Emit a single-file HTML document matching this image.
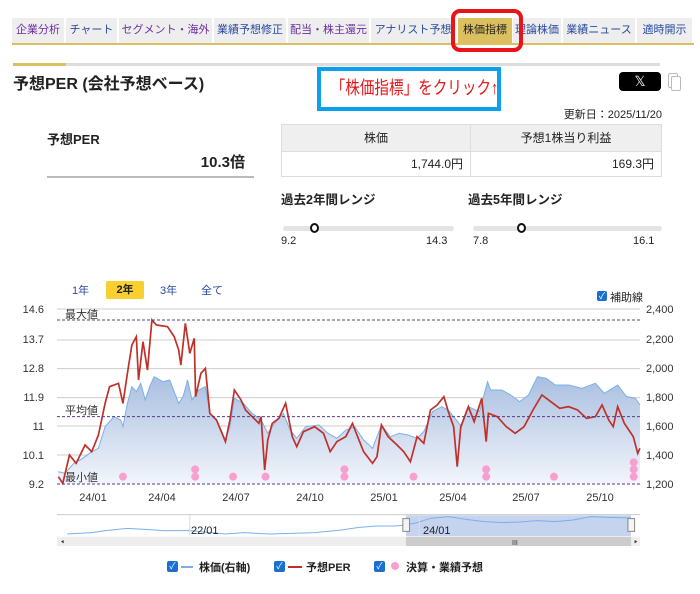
<!DOCTYPE html>
<html><head><meta charset="utf-8"><style>
*{margin:0;padding:0;box-sizing:border-box}
body{width:700px;height:594px;background:#fff;position:relative;overflow:hidden;font-family:"Liberation Sans","Noto Sans CJK JP",sans-serif;color:#222}
.a{position:absolute}
.tab{position:absolute;top:18px;height:25px;background:#eee;font-size:11px;line-height:25px;text-align:center;color:#6a2fa0;white-space:nowrap;overflow:hidden}
.tab.b{color:#2a4aa0}
</style></head><body>
<div class="tab" style="left:12px;width:52px">企業分析</div>
<div class="tab b" style="left:66px;width:51px">チャート</div>
<div class="tab" style="left:119px;width:93px">セグメント・海外</div>
<div class="tab b" style="left:214px;width:72px">業績予想修正</div>
<div class="tab" style="left:288px;width:81px">配当・株主還元</div>
<div class="tab b" style="left:371px;width:84px">アナリスト予想</div>
<div class="tab" style="left:458px;width:54px;background:#dcc060;color:#222">株価指標</div>
<div class="tab b" style="left:513px;width:48px">理論株価</div>
<div class="tab b" style="left:563px;width:72px">業績ニュース</div>
<div class="tab b" style="left:637px;width:55px">適時開示</div>
<div class="a" style="left:12px;top:43px;width:682px;height:2px;background:#dcc060"></div>
<div class="a" style="left:451px;top:9px;width:72px;height:43px;border:4px solid #e8141a;border-radius:9px"></div>
<div class="a" style="left:13px;top:63px;width:647px;height:3px;background:#ddd"></div>
<div class="a" style="left:13px;top:63px;width:53px;height:3px;background:#dcc060"></div>
<div class="a" style="left:13px;top:70px;font-size:16px;font-weight:bold">予想PER (会社予想ベース)</div>
<div class="a" style="left:317px;top:67px;width:184px;height:44px;border:4px solid #0aa0ee"></div>
<div class="a" style="left:311px;top:77px;width:196px;color:#e8141a;font-size:18px;line-height:22px;text-align:center;white-space:nowrap"><span style="display:inline-block;transform:scaleX(0.81);transform-origin:center">「株価指標」をクリック↑</span></div>
<div class="a" style="left:619px;top:72px;width:42px;height:19px;background:#000;border-radius:4px;color:#fff;font-size:14px;line-height:19px;text-align:center">𝕏</div>
<div class="a" style="left:668px;top:73px;width:10px;height:15px;border:1.5px solid #bbb;border-radius:2px"></div>
<div class="a" style="left:671px;top:76px;width:10px;height:15px;border:1.5px solid #bbb;border-radius:2px;background:#fff"></div>
<div class="a" style="left:550px;top:106px;width:112px;text-align:right;font-size:11px">更新日：2025/11/20</div>
<div class="a" style="left:47px;top:129px;font-size:13px;font-weight:bold">予想PER</div>
<div class="a" style="left:47px;top:151px;width:198px;text-align:right;font-size:15px;font-weight:bold">10.3倍</div>
<div class="a" style="left:47px;top:176px;width:207px;height:2px;background:#bbb"></div>
<div class="a" style="left:281px;top:124px;width:381px;height:53px;border:1px solid #ddd;font-size:12px">
<div class="a" style="left:0;top:0;width:189px;height:27px;background:#efefef;border-right:1px solid #ddd;border-bottom:1px solid #ddd;text-align:center;line-height:27px">株価</div>
<div class="a" style="left:189px;top:0;width:190px;height:27px;background:#efefef;border-bottom:1px solid #ddd;text-align:center;line-height:27px">予想1株当り利益</div>
<div class="a" style="left:0;top:27px;width:189px;height:24px;border-right:1px solid #ddd;text-align:right;line-height:24px;padding-right:7px">1,744.0円</div>
<div class="a" style="left:189px;top:27px;width:190px;height:24px;text-align:right;line-height:24px;padding-right:7px">169.3円</div>
</div>
<div class="a" style="left:281px;top:189px;font-size:12.5px;font-weight:bold">過去2年間レンジ</div>
<div class="a" style="left:468px;top:189px;font-size:12.5px;font-weight:bold">過去5年間レンジ</div>
<div class="a" style="left:283px;top:226px;width:171px;height:5px;background:#e4e4e4;border-radius:3px"></div>
<div class="a" style="left:473px;top:226px;width:189px;height:5px;background:#e4e4e4;border-radius:3px"></div>
<div class="a" style="left:310px;top:223px;width:9px;height:10px;border:2.5px solid #111;border-radius:50%;background:#fff"></div>
<div class="a" style="left:517px;top:223px;width:9px;height:10px;border:2.5px solid #111;border-radius:50%;background:#fff"></div>
<div class="a" style="left:281px;top:235px;font-size:11px">9.2</div>
<div class="a" style="left:426px;top:235px;font-size:11px">14.3</div>
<div class="a" style="left:473px;top:235px;font-size:11px">7.8</div>
<div class="a" style="left:633px;top:235px;font-size:11px">16.1</div>
<div class="a" style="left:72px;top:282px;font-size:11px;color:#2a4aa0">1年</div>
<div class="a" style="left:106px;top:281px;width:38px;height:18px;background:#f8d030;border-radius:2px;font-size:11px;font-weight:bold;text-align:center;line-height:18px">2年</div>
<div class="a" style="left:160px;top:282px;font-size:11px;color:#2a4aa0">3年</div>
<div class="a" style="left:201px;top:282px;font-size:11px;color:#2a4aa0">全て</div>
<div class="a" style="left:597px;top:291px;width:10px;height:10px;background:#1a6fd0;border-radius:2px;color:#fff;font-size:9px;line-height:10px;text-align:center">✓</div>
<div class="a" style="left:610px;top:289px;font-size:11px">補助線</div>
<svg class="a" style="left:0;top:0" width="700" height="594">
<defs><linearGradient id="g" x1="0" y1="0" x2="0" y2="1"><stop offset="0" stop-color="#a9bfe0"/><stop offset="1" stop-color="#f2f5fb"/></linearGradient></defs>
<g transform="translate(2.6,270) scale(0.4457,0.33333)">
<g stroke="#ccc" stroke-width="1"><line vector-effect="non-scaling-stroke" x1="122" y1="117" x2="1430" y2="117"/><line vector-effect="non-scaling-stroke" x1="122" y1="210" x2="1430" y2="210"/><line vector-effect="non-scaling-stroke" x1="122" y1="296" x2="1430" y2="296"/><line vector-effect="non-scaling-stroke" x1="122" y1="383" x2="1430" y2="383"/><line vector-effect="non-scaling-stroke" x1="122" y1="468" x2="1430" y2="468"/><line vector-effect="non-scaling-stroke" x1="122" y1="555" x2="1430" y2="555"/></g>
<polygon fill="url(#g)" points="125,642 125,605 140,610 160,580 180,565 200,545 215,535 230,470 250,440 265,450 270,470 280,400 290,350 300,365 310,340 320,390 330,350 340,320 360,335 375,330 395,400 405,380 415,330 425,390 440,360 455,350 465,430 480,450 500,510 510,470 520,385 540,400 560,430 580,450 595,490 610,460 630,430 645,480 660,505 680,470 710,465 730,490 750,505 770,480 790,470 810,510 830,535 850,465 870,500 890,490 910,495 930,505 945,485 965,425 985,410 1000,420 1030,470 1045,410 1070,425 1088,335 1095,360 1120,360 1140,375 1160,395 1180,375 1200,320 1220,325 1240,345 1270,345 1300,355 1330,340 1350,370 1380,345 1400,380 1420,385 1430,405 1430,642"/>
<polyline vector-effect="non-scaling-stroke" fill="none" stroke="#7ab0ea" stroke-width="1" points="125,605 140,610 160,580 180,565 200,545 215,535 230,470 250,440 265,450 270,470 280,400 290,350 300,365 310,340 320,390 330,350 340,320 360,335 375,330 395,400 405,380 415,330 425,390 440,360 455,350 465,430 480,450 500,510 510,470 520,385 540,400 560,430 580,450 595,490 610,460 630,430 645,480 660,505 680,470 710,465 730,490 750,505 770,480 790,470 810,510 830,535 850,465 870,500 890,490 910,495 930,505 945,485 965,425 985,410 1000,420 1030,470 1045,410 1070,425 1088,335 1095,360 1120,360 1140,375 1160,395 1180,375 1200,320 1220,325 1240,345 1270,345 1300,355 1330,340 1350,370 1380,345 1400,380 1420,385 1430,405"/>
<polyline vector-effect="non-scaling-stroke" fill="none" stroke="#c0302a" stroke-width="1.7" points="125,620 135,640 150,555 165,580 185,525 200,545 215,495 230,400 240,350 260,340 270,400 280,310 290,225 300,200 305,330 315,215 325,300 335,150 345,165 370,170 385,200 395,240 400,285 410,160 420,250 430,205 433,380 445,310 455,295 465,430 480,450 500,515 510,450 520,360 535,390 545,420 560,440 575,460 580,440 588,600 595,510 605,460 620,445 635,400 650,500 660,530 675,485 700,470 720,490 735,545 750,515 770,500 785,460 795,495 810,545 830,580 840,560 850,465 865,500 885,525 900,545 915,575 930,500 945,520 960,420 975,405 990,380 1000,425 1012,470 1020,590 1028,470 1045,410 1058,455 1075,385 1085,515 1090,430 1110,440 1130,470 1150,490 1170,470 1190,420 1210,375 1230,395 1250,415 1270,410 1290,420 1310,445 1330,440 1345,405 1360,450 1370,470 1380,410 1395,460 1415,500 1425,550 1430,535"/>
<g stroke="#5a3a80" stroke-width="1" stroke-dasharray="3,2"><line vector-effect="non-scaling-stroke" x1="122" y1="150" x2="1430" y2="150"/><line vector-effect="non-scaling-stroke" x1="122" y1="440" x2="1430" y2="440"/><line vector-effect="non-scaling-stroke" x1="122" y1="642" x2="1430" y2="642"/></g>
<g fill="#f7a0d0"><ellipse cx="270" cy="620" rx="9" ry="12"/><ellipse cx="432" cy="598" rx="9" ry="12"/><ellipse cx="432" cy="620" rx="9" ry="12"/><ellipse cx="517" cy="620" rx="9" ry="12"/><ellipse cx="590" cy="620" rx="9" ry="12"/><ellipse cx="767" cy="598" rx="9" ry="12"/><ellipse cx="767" cy="620" rx="9" ry="12"/><ellipse cx="922" cy="620" rx="9" ry="12"/><ellipse cx="1085" cy="598" rx="9" ry="12"/><ellipse cx="1085" cy="620" rx="9" ry="12"/><ellipse cx="1237" cy="620" rx="9" ry="12"/><ellipse cx="1416" cy="577" rx="9" ry="12"/><ellipse cx="1416" cy="598" rx="9" ry="12"/><ellipse cx="1416" cy="620" rx="9" ry="12"/></g>
</g>
<g transform="translate(2.6,490) scale(0.4457,0.33333)">
<line vector-effect="non-scaling-stroke" x1="122" y1="74" x2="1430" y2="74" stroke="#ccc" stroke-width="1"/>
<rect x="905" y="76" width="505" height="62" fill="#c5d3ee"/>
<polyline vector-effect="non-scaling-stroke" fill="none" stroke="#7ab0ea" stroke-width="1" points="145,132 200,128 230,122 280,115 320,118 360,122 420,122 500,132 540,128 600,132 700,128 760,120 800,112 840,108 880,108 905,105 930,98 960,85 1000,80 1040,88 1080,95 1120,98 1160,96 1200,92 1240,95 1280,90 1320,80 1360,82 1410,84"/>
<line vector-effect="non-scaling-stroke" x1="420" y1="76" x2="420" y2="138" stroke="#ddd" stroke-width="1"/>
<line vector-effect="non-scaling-stroke" x1="935" y1="76" x2="935" y2="138" stroke="#ddd" stroke-width="1"/>
<rect vector-effect="non-scaling-stroke" x="898" y="86" width="15" height="38" fill="#f4f4f4" stroke="#888" stroke-width="1"/>
<rect vector-effect="non-scaling-stroke" x="1403" y="86" width="15" height="38" fill="#f4f4f4" stroke="#888" stroke-width="1"/>
<rect x="122" y="140" width="1308" height="28" fill="#eee"/>
<rect x="905" y="140" width="505" height="28" fill="#ccc"/>
<polygon points="137,150 131,155 137,160" fill="#333"/><polygon points="1418,150 1424,155 1418,160" fill="#333"/>
</g>
<g font-family="Liberation Sans,Noto Sans CJK JP,sans-serif" font-size="11" fill="#333">
<text x="65" y="318">最大値</text><text x="65" y="414">平均値</text><text x="65" y="481">最小値</text>
<g text-anchor="end"><text x="44" y="313">14.6</text><text x="44" y="343">13.7</text><text x="44" y="372">12.8</text><text x="44" y="401">11.9</text><text x="44" y="430">11</text><text x="44" y="459">10.1</text><text x="44" y="488">9.2</text></g>
<text x="646" y="313">2,400</text><text x="646" y="343">2,200</text><text x="646" y="372">2,000</text><text x="646" y="401">1,800</text><text x="646" y="430">1,600</text><text x="646" y="459">1,400</text><text x="646" y="488">1,200</text>
<g text-anchor="middle"><text x="93" y="501">24/01</text><text x="162" y="501">24/04</text><text x="236" y="501">24/07</text><text x="310" y="501">24/10</text><text x="384" y="501">25/01</text><text x="453" y="501">25/04</text><text x="526" y="501">25/07</text><text x="600" y="501">25/10</text></g>
<text x="191" y="534" fill="#222">22/01</text><text x="423" y="534" fill="#222">24/01</text>
<text x="512" y="545" font-size="7">III</text>
</g>
</svg>
<div class="a" style="left:167px;top:561px;width:11px;height:11px;background:#1a6fd0;border-radius:2px;color:#fff;font-size:9px;line-height:11px;text-align:center">✓</div>
<div class="a" style="left:181px;top:566px;width:12px;height:2px;background:#7ab0ea"></div>
<div class="a" style="left:199px;top:559px;font-size:11px;font-weight:bold">株価(右軸)</div>
<div class="a" style="left:274px;top:561px;width:11px;height:11px;background:#1a6fd0;border-radius:2px;color:#fff;font-size:9px;line-height:11px;text-align:center">✓</div>
<div class="a" style="left:288px;top:566px;width:14px;height:2px;background:#c0302a"></div>
<div class="a" style="left:306px;top:559px;font-size:11px;font-weight:bold">予想PER</div>
<div class="a" style="left:374px;top:561px;width:11px;height:11px;background:#1a6fd0;border-radius:2px;color:#fff;font-size:9px;line-height:11px;text-align:center">✓</div>
<div class="a" style="left:391px;top:562px;width:8px;height:8px;background:#f7a0d0;border-radius:50%"></div>
<div class="a" style="left:406px;top:559px;font-size:11px;font-weight:bold">決算・業績予想</div>
</body></html>
